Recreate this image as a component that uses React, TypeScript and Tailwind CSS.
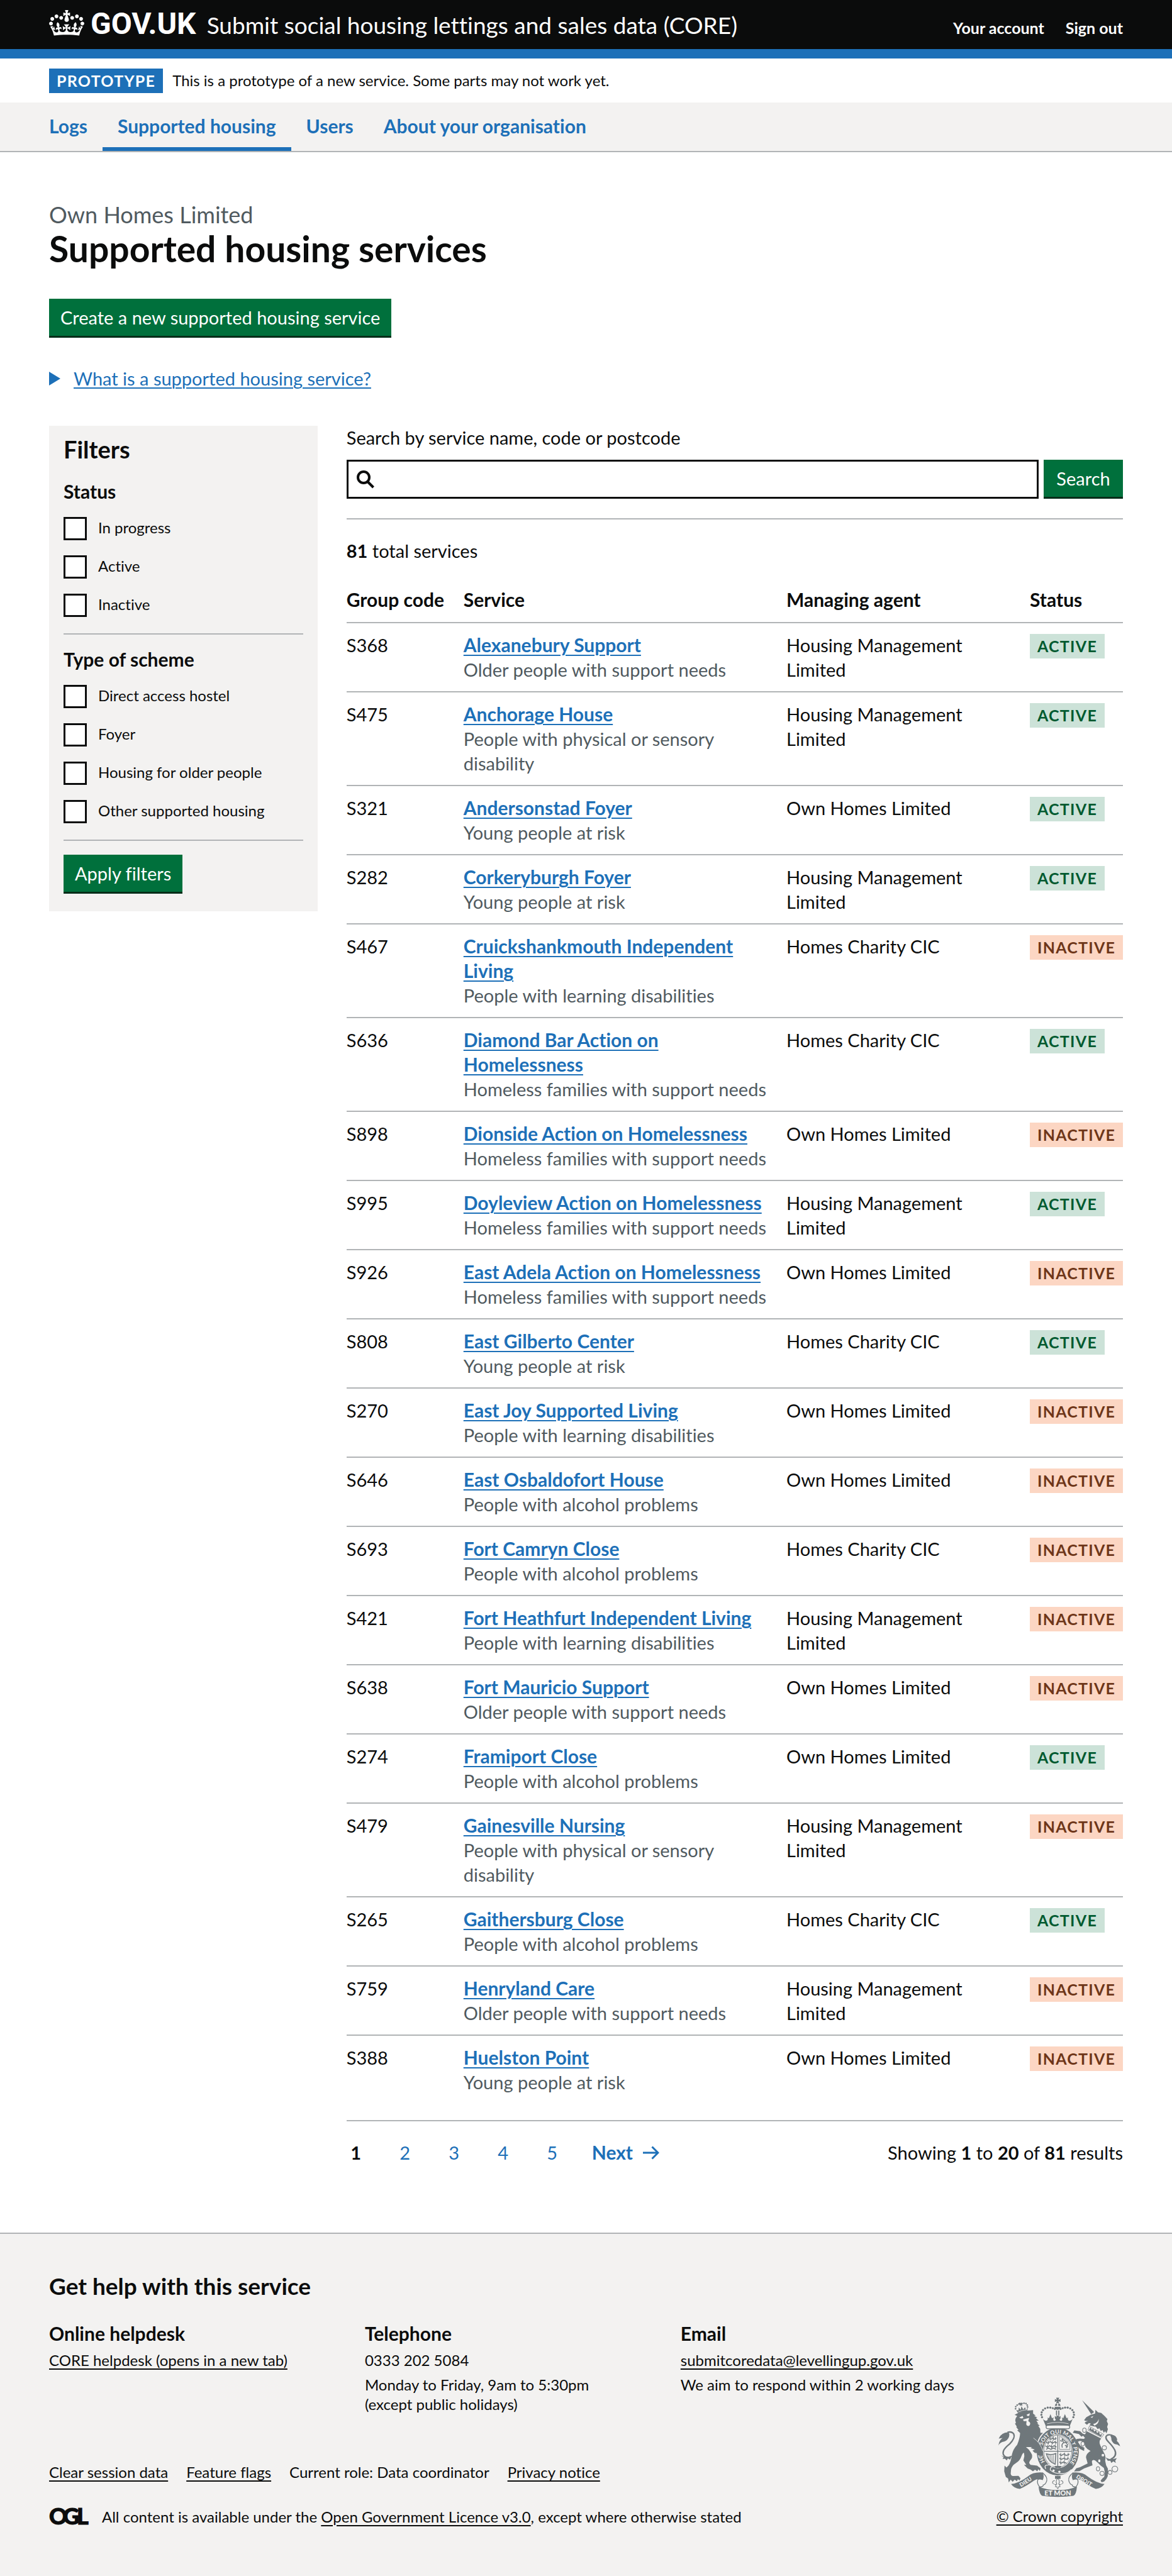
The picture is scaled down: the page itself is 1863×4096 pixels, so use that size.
import React from "react";

const services: [string, string, string, string, boolean][] = [
  ["S368", "Alexanebury Support", "Older people with support needs", "Housing Management Limited", true],
  ["S475", "Anchorage House", "People with physical or sensory disability", "Housing Management Limited", true],
  ["S321", "Andersonstad Foyer", "Young people at risk", "Own Homes Limited", true],
  ["S282", "Corkeryburgh Foyer", "Young people at risk", "Housing Management Limited", true],
  ["S467", "Cruickshankmouth Independent Living", "People with learning disabilities", "Homes Charity CIC", false],
  ["S636", "Diamond Bar Action on Homelessness", "Homeless families with support needs", "Homes Charity CIC", true],
  ["S898", "Dionside Action on Homelessness", "Homeless families with support needs", "Own Homes Limited", false],
  ["S995", "Doyleview Action on Homelessness", "Homeless families with support needs", "Housing Management Limited", true],
  ["S926", "East Adela Action on Homelessness", "Homeless families with support needs", "Own Homes Limited", false],
  ["S808", "East Gilberto Center", "Young people at risk", "Homes Charity CIC", true],
  ["S270", "East Joy Supported Living", "People with learning disabilities", "Own Homes Limited", false],
  ["S646", "East Osbaldofort House", "People with alcohol problems", "Own Homes Limited", false],
  ["S693", "Fort Camryn Close", "People with alcohol problems", "Homes Charity CIC", false],
  ["S421", "Fort Heathfurt Independent Living", "People with learning disabilities", "Housing Management Limited", false],
  ["S638", "Fort Mauricio Support", "Older people with support needs", "Own Homes Limited", false],
  ["S274", "Framiport Close", "People with alcohol problems", "Own Homes Limited", true],
  ["S479", "Gainesville Nursing", "People with physical or sensory disability", "Housing Management Limited", false],
  ["S265", "Gaithersburg Close", "People with alcohol problems", "Homes Charity CIC", true],
  ["S759", "Henryland Care", "Older people with support needs", "Housing Management Limited", false],
  ["S388", "Huelston Point", "Young people at risk", "Own Homes Limited", false],
];

const statusFilters = ["In progress", "Active", "Inactive"];
const schemeFilters = ["Direct access hostel", "Foyer", "Housing for older people", "Other supported housing"];

function CrownLogo() {
  return (
    <svg viewBox="0 0 132 97" className="mt-1 h-[41px] w-[56px] self-start" fill="currentColor" aria-hidden="true">
      <path d="M25 30.2c3.5 1.5 7.7-.2 9.1-3.7 1.5-3.6-.2-7.8-3.9-9.2-3.6-1.4-7.6.3-9.1 3.9-1.4 3.5.3 7.5 3.9 9zM9 39.5c3.6 1.5 7.8-.2 9.2-3.7 1.5-3.6-.2-7.8-3.9-9.1-3.6-1.5-7.6.2-9.1 3.8-1.4 3.5.3 7.5 3.8 9zM4.4 57.2c3.5 1.5 7.7-.2 9.1-3.8 1.5-3.6-.2-7.7-3.9-9.1-3.5-1.5-7.6.3-9.1 3.8-1.4 3.5.3 7.6 3.9 9.1zm38.3-21.4c3.5 1.5 7.7-.2 9.1-3.8 1.5-3.6-.2-7.7-3.9-9.1-3.6-1.5-7.6.3-9.1 3.8-1.3 3.6.4 7.7 3.9 9.1zm64.4-5.6c-3.6 1.5-7.8-.2-9.1-3.7-1.5-3.6.2-7.8 3.8-9.2 3.6-1.4 7.7.3 9.2 3.9 1.3 3.5-.4 7.5-3.9 9zm15.9 9.3c-3.6 1.5-7.7-.2-9.1-3.7-1.5-3.6.2-7.8 3.7-9.1 3.6-1.5 7.7.2 9.2 3.8 1.5 3.5-.3 7.5-3.8 9zm4.7 17.7c-3.6 1.5-7.8-.2-9.2-3.8-1.5-3.6.2-7.7 3.9-9.1 3.6-1.5 7.7.3 9.2 3.8 1.3 3.5-.4 7.6-3.9 9.1zM89.3 35.8c-3.6 1.5-7.8-.2-9.2-3.8-1.4-3.6.2-7.7 3.9-9.1 3.6-1.5 7.7.3 9.2 3.8 1.4 3.6-.3 7.7-3.9 9.1zM69.7 17.7l8.9 4.7V9.3l-8.9 2.8c-.2-.3-.5-.6-.9-.9L72.4 0H59.6l3.5 11.2c-.3.3-.6.5-.9.9l-8.8-2.8v13.1l8.8-4.7c.3.3.6.7.9.9l-5 15.4v.1c-.2.8-.4 1.6-.4 2.4 0 4.1 3.1 7.5 7 8.1h.2c.3 0 .7.1 1 .1.4 0 .7 0 1-.1h.2c4-.6 7.1-4.1 7.1-8.1 0-.8-.1-1.7-.4-2.4V34l-5.1-15.4c.4-.2.7-.6 1-.9zM66 92.8c16.9 0 32.8 1.1 47.1 3.2 4-16.9 8.9-26.7 14-33.5l-9.6-3.4c1 4.9 1.1 7.2 0 10.2-1.5-1.4-3-4.3-4.2-8.7L108.6 76c2.8-2 5-3.2 7.5-3.3-4.4 9.4-10 11.9-13.6 11.2-4.3-.8-6.3-4.6-5.6-7.9 1-4.7 5.7-5.9 8-.5 4.3-8.7-3-11.4-7.6-8.8 7.1-7.2 7.9-13.5 2.1-21.1-8 6.1-8.1 12.3-4.5 20.8-4.7-5.4-12.1-2.5-9.5 6.2 3.4-5.2 7.9-2 7.2 3.1-.6 4.3-6.4 7.8-13.5 7.2-10.3-.9-10.9-8-11.2-13.8 2.5-.5 7.1 1.8 11 7.3L80.2 60c-4.1 4.4-8 5.3-12.3 5.4 1.4-4.4 8-11.6 8-11.6H55.5s6.4 7.2 7.9 11.6c-4.2-.1-8-1-12.3-5.4l1.4 16.4c3.9-5.5 8.5-7.7 10.9-7.3-.3 5.8-.9 12.8-11.1 13.8-7.2.6-12.9-2.9-13.5-7.2-.7-5 3.8-8.3 7.1-3.1 2.7-8.7-4.6-11.6-9.4-6.2 3.7-8.5 3.6-14.7-4.6-20.8-5.8 7.6-5 13.9 2.2 21.1-4.7-2.6-11.9.1-7.7 8.8 2.3-5.5 7.1-4.2 8.1.5.7 3.3-1.3 7.1-5.7 7.9-3.5.7-9-1.8-13.5-11.2 2.5.1 4.7 1.3 7.5 3.3l-4.7-15.4c-1.2 4.4-2.7 7.2-4.3 8.7-1.1-3-.9-5.3 0-10.2l-9.5 3.4c5 6.9 9.9 16.7 14 33.5 14.8-2.1 30.8-3.2 47.7-3.2z" />
    </svg>
  );
}

const pearls = [[420, 171], [407, 166], [392, 163], [376, 163], [360, 168], [347, 178], [339, 192], [337, 207], [341, 222]];
const lionPearls = [[178, 170], [179, 157], [188, 147], [199, 141], [217, 138], [230, 136], [242, 138], [250, 147], [252, 159]];

function RoyalArms() {
  return (
    <svg viewBox="72 100 752 616" className="h-[159px] w-[194px]" aria-hidden="true">
      <defs>
        <path id="garter" d="M438 541A98 109 0 0 1 438 323A98 109 0 0 1 438 541" />
      </defs>

      {/* Garter and shield */}
      <ellipse cx="438" cy="433" rx="130" ry="148" fill="#6f777b" />
      <ellipse cx="438" cy="432" rx="91" ry="104" fill="#f3f2f1" />
      <ellipse cx="438" cy="432" rx="86" ry="99" fill="none" stroke="#6f777b" strokeWidth="3" />
      <path d="M438 332V532M352 432H524" stroke="#6f777b" strokeWidth="5" />
      <g stroke="#6f777b" strokeWidth="6" fill="none">
        <path d="M388 352l8 6 12-8 8 8 14-6M366 374l10 8 16-10 12 10 16-8 12 6M362 398l10 8 16-8 14 8 14-8 14 8M366 420l14-8 16 8 14-8 18 8" />
        <path d="M390 342v24M410 340v26M424 344v18M380 368v22M404 366v24M424 368v22M376 392v24M400 392v24M422 392v24" strokeWidth="4" />
        <path d="M448 450l12 8 16-10 14 10 20-8M448 474l12 8 16-8 14 8 16-8M448 498l10 8 16-8 18 8" />
        <path d="M456 442v22M480 440v24M502 442v20M456 466v22M480 466v24M500 466v20M456 490v24M478 492v20" strokeWidth="4" />
        <path d="M448 340V420H514Q512 362 448 340Z" strokeWidth="3" />
        <path d="M466 410Q458 388 476 378Q462 366 466 356L482 368L498 392L490 412M478 380l20-6M482 394l18 12M462 372l-8-8" />
      </g>
      <path d="M368 448Q398 458 426 446L422 512Q380 496 368 448Z" fill="none" stroke="#6f777b" strokeWidth="6" />
      <path d="M382 456l4 26M392 457l4 36M402 457l2 44M412 455l0 50" stroke="#6f777b" strokeWidth="3" />
      <path d="M424 534h30l6-12h-42z" fill="#6f777b" />
      <text fill="#f3f2f1" fontFamily="Lato, sans-serif" fontWeight="700" fontSize="34">
        <textPath href="#garter" startOffset="94">HO<tspan dx="50">SOIT QUI MAL Y PENSE</tspan></textPath>
      </text>
      <path d="M364 540Q350 516 380 516Q402 512 404 528Q390 532 392 548Q420 572 470 570Q500 566 522 544" fill="none" stroke="#f3f2f1" strokeWidth="5" />
      <circle cx="412" cy="551" r="7" fill="#f3f2f1" />
      <circle cx="448" cy="558" r="7" fill="#f3f2f1" />

      {/* Crown above the shield */}
      <rect x="366" y="271" width="146" height="22" rx="11" fill="#f3f2f1" stroke="#6f777b" strokeWidth="5" />
      <path d="M346 232Q360 252 374 240Q380 226 372 224L384 228L393 203L402 228L414 224Q406 236 414 244Q424 246 426 236L420 230V214L432 222L428 212H448L443 222L455 214V230L449 236Q452 246 462 244Q470 236 462 224L472 228L482 203L492 228L504 224Q496 226 502 240Q516 252 530 232L512 276Q438 262 364 276Z" fill="#6f777b" />
      <path d="M372 262Q438 246 504 262" fill="none" stroke="#f3f2f1" strokeWidth="3" />
      <g fill="#6f777b">
        {pearls.map(([x, y]) => (
          <React.Fragment key={`${x}-${y}`}>
            <circle cx={x} cy={y} r="6.5" />
            <circle cx={875 - x} cy={y} r="6.5" />
          </React.Fragment>
        ))}
        <path d="M428 102h19l-5 13 13-5v18l-13-5 5 12h-19l4-12-12 5v-18l12 5zM420 152Q422 138 434 136V152ZM455 152Q453 138 441 136V152ZM418 158h39q-3 18-20 18t-19-18zM427 180h7v30h-7zM441 180h7v30h-7z" />
      </g>

      {/* Lion */}
      <path d="M188 214L172 207L186 200Q230 180 262 180L286 178L286 200L302 212L292 214L312 224L303 228L321 243L306 243L318 262L310 260L327 274L318 276L330 294L331 318L347 319Q320 345 314 372L336 402L348 440L344 458L325 462L312 455L318 440L300 445L282 428L296 422L270 412L280 406L242 406Q262 420 272 440Q287 462 275 480Q262 495 262 505L270 516L310 520L332 537L328 553L318 543L312 555L298 546L285 555L270 545L252 538L230 516L244 516L226 488L232 462L230 442Q222 440 215 460Q205 490 180 505Q155 520 150 545L148 570Q150 584 162 584L196 583L208 598L203 612L192 604L187 616L172 607L160 620L148 607L136 624L132 600L118 590L108 555L110 520L122 532L134 520Q150 500 156 450Q163 420 188 392Q205 350 206 320L188 302L196 300L182 282L186 280L174 262L180 258L176 240Q178 225 188 214Z" fill="#6f777b" />
      <path d="M200 224L222 214L226 228L212 230ZM246 206L266 198L262 214L250 214ZM224 236L262 226L256 246L262 250A12 14 0 1 1 244 260L246 246L228 246Z" fill="#f3f2f1" />
      <path d="M288 350Q330 378 346 430" fill="none" stroke="#f3f2f1" strokeWidth="3" />
      <path d="M316 458L338 466M310 462L300 440" stroke="#f3f2f1" strokeWidth="3" />
      <path d="M182 178L194 198Q220 184 250 184L254 164L242 176L236 160L226 174L214 154L210 176L198 162L196 180ZM201 132l8 4 2-6 4 8 8-2-6 8 4 8-10-4-6 6v-10l-8-4z" fill="#6f777b" />
      <path d="M194 190Q220 176 250 176" fill="none" stroke="#f3f2f1" strokeWidth="3" />
      <g fill="#6f777b">
        {lionPearls.map(([x, y]) => <circle key={`${x}-${y}`} cx={x} cy={y} r="5" />)}
      </g>
      <path d="M132 473Q92 462 104 428Q112 410 142 386Q178 350 167 326Q156 308 128 315" fill="none" stroke="#6f777b" strokeWidth="9" />
      <path d="M72 396Q78 362 98 350L74 354Q86 318 134 314Q146 332 132 354Q118 374 98 374Q80 380 72 396ZM88 456Q112 476 156 458L144 484L130 476L124 488L112 478L98 480L104 470Z" fill="#6f777b" />

      {/* Unicorn */}
      <path d="M588 117L644 204L662 190Z" fill="#6f777b" />
      <path d="M600 240L614 222L642 206L668 200L670 176L686 192L706 196L726 214L744 234L740 246L748 264L742 282L747 296L738 322L730 308L722 318L712 300L704 308L694 290L684 296L672 280L658 278L632 272L642 262L630 258L618 268L604 258L612 246Z" fill="#6f777b" />
      <path d="M640 222L658 214L650 226ZM656 264Q686 258 690 232Q694 262 664 274ZM604 248L624 242L610 252Z" fill="#f3f2f1" />
      <path d="M632 278L722 328L708 346L624 302Z" fill="#f3f2f1" stroke="#6f777b" strokeWidth="3" />
      <path d="M630 300L640 284L648 300L656 292L662 310L674 302L680 320L692 312L698 330L712 326L704 342Z" fill="#6f777b" />
      <path d="M616 308L706 354Q688 370 700 395Q712 420 722 440Q737 465 730 490L736 518L747 540L746 585L738 602L724 618L708 623L702 612L716 596L724 590L728 562L722 535Q700 520 684 502L668 488Q650 480 648 495L652 518L600 538L572 554L538 556L552 537L575 530L622 507L612 470Q613 445 640 430Q620 422 608 404L600 376Q575 362 562 374L578 398L602 410L600 430L575 418L558 398L545 380L543 362Q560 350 598 356L606 350L594 336L584 342L568 326L530 318L540 303L576 308L592 324L606 328Z" fill="#6f777b" />
      <g fill="#f3f2f1" stroke="#6f777b" strokeWidth="4">
        <ellipse cx="602" cy="302" rx="11" ry="13" />
        <ellipse cx="592" cy="386" rx="11" ry="13" />
        <circle cx="725" cy="410" r="13" />
        <circle cx="716" cy="456" r="10" />
        <ellipse cx="694" cy="491" rx="9" ry="11" />
        <ellipse cx="686" cy="540" rx="10" ry="13" />
        <circle cx="711" cy="568" r="13" />
        <circle cx="760" cy="562" r="12" />
        <circle cx="790" cy="541" r="18" />
      </g>
      <path d="M764 482Q806 460 790 426Q778 402 752 376Q722 346 744 332Q764 326 784 340" fill="none" stroke="#6f777b" strokeWidth="9" />
      <path d="M762 336Q792 324 804 358L802 368Q818 380 822 402Q806 388 790 388Q766 374 768 350ZM732 468Q760 490 802 474L792 490L796 504L780 494L768 504L762 490L746 490Z" fill="#6f777b" />

      {/* Motto ribbon */}
      <path d="M150 634Q200 628 255 586Q286 558 345 563Q357 588 345 610Q318 596 292 612Q244 646 204 664Q170 662 150 634Z" fill="#6f777b" />
      <path d="M726 634Q676 628 621 586Q590 558 531 563Q519 588 531 610Q558 596 584 612Q632 646 672 664Q706 662 726 634Z" fill="#6f777b" />
      <path d="M344 564Q376 590 370 614Q364 636 348 640Q350 652 326 652Q306 626 316 606Q328 598 346 606M532 564Q500 590 506 614Q512 636 528 640Q526 652 550 652Q570 626 560 606Q548 598 530 606" fill="none" stroke="#6f777b" strokeWidth="5" />
      <path d="M320 650Q376 672 438 670Q500 672 556 650Q552 700 534 706Q438 720 342 706Q324 696 320 650Z" fill="#6f777b" />
      <path d="M421 584h34v18h-34z" fill="#6f777b" />
      <path d="M438 598Q422 616 432 634Q424 638 424 650L432 650Q438 674 444 650L452 650Q452 638 444 634Q454 616 438 598ZM430 636Q418 640 406 628Q404 612 420 614M446 636Q458 640 470 628Q472 612 456 614" fill="#f3f2f1" stroke="#6f777b" strokeWidth="4" />
      <g fill="#f3f2f1" fontFamily="Lato, sans-serif" fontWeight="900">
        <text x="212" y="652" fontSize="34" transform="rotate(-32 212 652)">DIEU</text>
        <text x="438" y="704" fontSize="42" textAnchor="middle">ET MON</text>
        <text x="549" y="595" fontSize="34" transform="rotate(31 549 595)">DROIT</text>
      </g>
    </svg>
  );
}

function FilterGroup({ title, options }: { title: string; options: string[] }) {
  return (
    <fieldset>
      <legend className="mb-[22px] text-3xl leading-[38px] font-bold">{title}</legend>
      <div className="flex flex-col gap-6">
        {options.map((option) => (
          <label key={option} className="flex items-center gap-[18px]">
            <input type="checkbox" className="size-[37px] shrink-0 appearance-none border-3 border-[#0b0c0c] bg-white" />
            <span className="pb-1 text-2xl leading-[31px]">{option}</span>
          </label>
        ))}
      </div>
    </fieldset>
  );
}

const greenButton = "h-[62px] shrink-0 border-b-3 border-[#002d18] bg-[#00703c] text-[29px] text-white";
const footerLink = "underline decoration-2 underline-offset-4";

export default function App() {
  return (
    <div className="bg-[#f3f2f1] font-['Lato',sans-serif] text-[29px] leading-[39px] text-[#0b0c0c] [font-variant-ligatures:none]">
      <header className="flex h-[93px] items-baseline justify-between border-b-15 border-[#1d70b8] bg-[#0b0c0c] px-[78px] pt-3 text-white">
        <div className="flex items-baseline gap-[17px]">
          <a href="#home" className="flex items-baseline gap-[10px] font-['Roboto',sans-serif] text-5xl leading-[52px] font-bold">
            <CrownLogo />
            <span>GOV.UK</span>
          </a>
          <a href="#service" className="text-[37px]">Submit social housing lettings and sales data (CORE)</a>
        </div>
        <nav aria-label="Account" className="flex gap-[34px] text-[25px] font-bold">
          <a href="#account">Your account</a>
          <a href="#signout">Sign out</a>
        </nav>
      </header>

      <div className="flex h-[70px] items-center gap-[15px] bg-white px-[78px] text-2xl">
        <strong className="bg-[#1d70b8] px-3 text-[25px] leading-[39px] tracking-wider text-white">PROTOTYPE</strong>
        <span>This is a prototype of a new service. Some parts may not work yet.</span>
      </div>

      <nav aria-label="Primary" className="h-[79px] border-b-2 border-[#b1b4b6] px-[78px]">
        <ul className="-ml-6 flex h-full text-3xl font-bold text-[#1d70b8]">
          <li className="flex items-center px-6 pb-1"><a href="#logs">Logs</a></li>
          <li className="flex items-center border-b-6 border-[#1d70b8] px-6 pt-0.5"><a href="#supported" aria-current="page">Supported housing</a></li>
          <li className="flex items-center px-6 pb-1"><a href="#users">Users</a></li>
          <li className="flex items-center px-6 pb-1"><a href="#organisation">About your organisation</a></li>
        </ul>
      </nav>

      <main className="bg-white px-[78px] pt-[77px] pb-[108px]">
        <p className="text-4xl leading-[45px] text-[#505a5f]">Own Homes Limited</p>
        <h1 className="text-[57px] leading-[62px] font-bold">Supported housing services</h1>
        <button type="button" className={`${greenButton} mt-[49px] block px-[18px]`}>Create a new supported housing service</button>
        <details className="mt-[45px] text-[#1d70b8]">
          <summary className="flex list-none items-center gap-[21px]">
            <svg viewBox="0 0 18 22" className="h-[22px] w-[18px]" fill="currentColor" aria-hidden="true"><path d="M0 0L18 11L0 22Z" /></svg>
            <span className="underline decoration-2 underline-offset-3">What is a supported housing service?</span>
          </summary>
        </details>

        <div className="mt-[56px] flex items-start gap-[46px]">
          <form className="w-1/4 shrink-0 bg-[#f3f2f1] px-[23px] pt-[13px] pb-7">
            <h2 className="mb-6 text-[38px] leading-[48px] font-bold">Filters</h2>
            <FilterGroup title="Status" options={statusFilters} />
            <div className="mt-[26px] border-y-2 border-[#b1b4b6] pt-5 pb-[26px]">
              <FilterGroup title="Type of scheme" options={schemeFilters} />
            </div>
            <button type="button" className={`${greenButton} mt-[22px] px-[18px]`}>Apply filters</button>
          </form>

          <div className="min-w-0 flex-1">
            <label htmlFor="search" className="block leading-[38px]">Search by service name, code or postcode</label>
            <div className="mt-4 flex gap-2">
              <div className="flex h-[62px] flex-1 items-center border-3 border-[#0b0c0c] pl-3">
                <svg viewBox="0 0 30 30" className="size-[30px]" fill="none" stroke="#0b0c0c" aria-hidden="true">
                  <circle cx="12" cy="12" r="9" strokeWidth="4" />
                  <path d="M18.5 19L27.5 28" strokeWidth="4" />
                </svg>
                <input id="search" type="search" className="h-full min-w-0 flex-1 bg-transparent px-2 outline-none" />
              </div>
              <button type="button" className={`${greenButton} w-[126px]`}>Search</button>
            </div>
            <hr className="mt-[31px] border-t-2 border-[#b1b4b6]" />
            <p className="mt-[30px]"><strong>81</strong> total services</p>

            <table className="mt-6 w-full table-fixed border-collapse text-left">
              <thead>
                <tr className="border-b-2 border-[#b1b4b6] text-3xl leading-[39px]">
                  <th className="w-[186px] pt-[15px] pb-4">Group code</th>
                  <th className="pt-[15px] pb-4">Service</th>
                  <th className="w-[387px] pt-[15px] pb-4">Managing agent</th>
                  <th className="w-[148px] pt-[15px] pb-4">Status</th>
                </tr>
              </thead>
              <tbody>
                {services.map(([code, name, need, agent, active]) => (
                  <tr key={code} className="border-b-2 border-[#b1b4b6] align-top last:border-b-0">
                    <td className="py-[15px]">{code}</td>
                    <td className="py-[15px] pr-6">
                      <a href={`#${code}`} className="text-3xl leading-[39px] font-bold text-[#1d70b8] underline decoration-2 underline-offset-4">{name}</a>
                      <div className="text-[#505a5f]">{need}</div>
                    </td>
                    <td className="py-[15px] pr-6">{agent}</td>
                    <td className="pt-[17px] pb-[13px]">
                      <strong
                        className={
                          active
                            ? "inline-block bg-[#cce2d8] px-3 align-top text-[25px] leading-[39px] tracking-wider text-[#005a30]"
                            : "inline-block bg-[#fcd6c3] px-3 align-top text-[25px] leading-[39px] tracking-wider text-[#6e3619]"
                        }
                      >
                        {active ? "ACTIVE" : "INACTIVE"}
                      </strong>
                    </td>
                  </tr>
                ))}
              </tbody>
            </table>

            <div className="mt-[26px] flex items-center justify-between border-t-2 border-[#b1b4b6] pt-[30px]">
              <nav aria-label="Pagination" className="flex items-center gap-12 text-[#1d70b8]">
                <a href="#page-1" aria-current="page" className="w-[30px] text-center font-bold text-[#0b0c0c]">1</a>
                <a href="#page-2" className="w-[30px] text-center">2</a>
                <a href="#page-3" className="w-[30px] text-center">3</a>
                <a href="#page-4" className="w-[30px] text-center">4</a>
                <a href="#page-5" className="w-[30px] text-center">5</a>
                <a href="#next" className="flex items-center gap-4 text-3xl leading-[39px] font-bold">
                  Next
                  <svg viewBox="0 0 26 22" className="h-[22px] w-[26px]" fill="none" stroke="currentColor" strokeWidth="3" aria-hidden="true">
                    <path d="M0 11H24M14.500 1.500L24 11L14.500 20.500" />
                  </svg>
                </a>
              </nav>
              <p>Showing <strong>1</strong> to <strong>20</strong> of <strong>81</strong> results</p>
            </div>
          </div>
        </div>
      </main>

      <footer className="border-t-2 border-[#b1b4b6] px-[78px] pt-[59px] pb-[78px] text-2xl leading-[31px]">
        <h2 className="text-[37px] leading-[48px] font-bold">Get help with this service</h2>
        <div className="mt-[32px] flex">
          <div className="flex-1">
            <div className="grid grid-cols-3">
              <div>
                <h3 className="mb-2 text-3xl leading-[38px] font-bold">Online helpdesk</h3>
                <a href="#helpdesk" className={footerLink}>CORE helpdesk (opens in a new tab)</a>
              </div>
              <div>
                <h3 className="mb-2 text-3xl leading-[38px] font-bold">Telephone</h3>
                <p className="mb-2">0333 202 5084</p>
                <p className="mb-2">Monday to Friday, 9am to 5:30pm<br />(except public holidays)</p>
              </div>
              <div>
                <h3 className="mb-2 text-3xl leading-[38px] font-bold">Email</h3>
                <p className="mb-2"><a href="mailto:submitcoredata@levellingup.gov.uk" className={footerLink}>submitcoredata@levellingup.gov.uk</a></p>
                <p className="whitespace-nowrap">We aim to respond within 2 working days</p>
              </div>
            </div>
            <ul className="mt-[69px] flex gap-[29px]">
              <li><a href="#clear" className={footerLink}>Clear session data</a></li>
              <li><a href="#flags" className={footerLink}>Feature flags</a></li>
              <li>Current role: Data coordinator</li>
              <li><a href="#privacy" className={footerLink}>Privacy notice</a></li>
            </ul>
            <div className="mt-8 flex items-center gap-4">
              <svg viewBox="0 0 68 46" className="h-[46px] w-[68px]" fill="currentColor" stroke="currentColor" role="img" aria-label="Open Government Licence">
                <text x="0 22 44" y="36" fontFamily="Lato, sans-serif" fontWeight="900" fontSize="36">OGL</text>
              </svg>
              <p>All content is available under the <a href="#ogl" className={footerLink}>Open Government Licence v3.0</a>, except where otherwise stated</p>
            </div>
          </div>
          <a href="#crown" className={`${footerLink} mb-2 flex flex-col items-center gap-[14px] self-end whitespace-nowrap`}>
            <RoyalArms />
            © Crown copyright
          </a>
        </div>
      </footer>
    </div>
  );
}
